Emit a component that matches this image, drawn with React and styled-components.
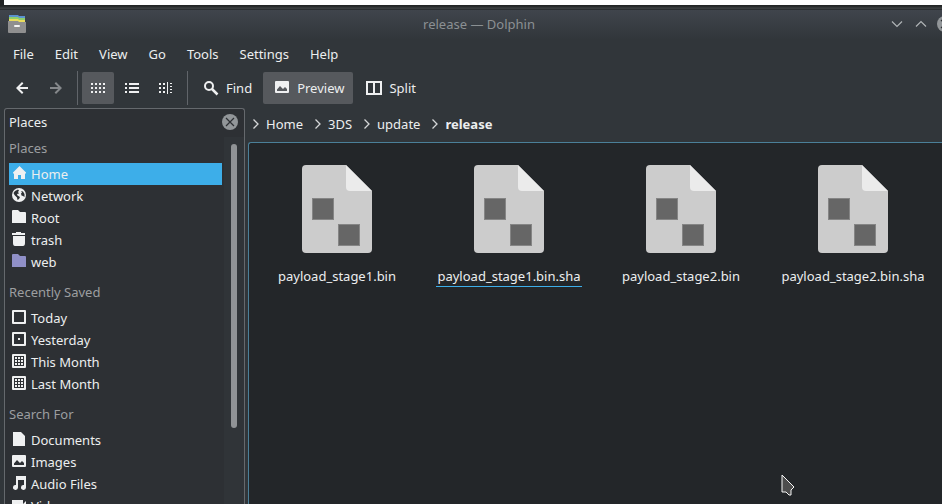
import styled, { createGlobalStyle } from 'styled-components';

const GlobalStyle = createGlobalStyle`
    * {
        box-sizing: border-box;
    }

    body {
        margin: 0;
        overflow: hidden;
        background-color: #31363a;
        color: #eceeef;
        font-family: "Noto Sans", sans-serif;
        font-size: 13px;
        line-height: 20px;
    }

    button {
        font: inherit;
        color: inherit;
        background: none;
        border: none;
        padding: 0;
    }

    a {
        color: inherit;
        text-decoration: none;
    }

    ul, ol {
        list-style: none;
        margin: 0;
        padding: 0;
    }
`

const Desktop = styled.div`
    display: flex;
    flex-direction: column;
    height: 100vh;
    overflow: hidden;
    position: relative;
`

const WindowBehind = styled.div`
    flex: none;
    height: 10px;
    padding-left: 4px;
    background: linear-gradient(#232526 0 6px, #3b3e40 8px, #3b3e40 9px, #2b2e31 9px);
`

const Paper = styled.div`
    height: 5px;
    background-color: white;
`

/* the window runs a little past the right edge of the screen */
const TitleBar = styled.header`
    flex: none;
    display: grid;
    grid-template-columns: 80px 1fr 83px;
    align-items: center;
    width: calc(100% + 14px);
    height: 30px;
    padding: 0 3px 2px 8px;
    background: linear-gradient(#40454c, #31363a);
`

const Title = styled.h1`
    margin: 0;
    font-size: 13px;
    font-weight: 400;
    text-align: center;
    color: #8b9093;
`

const WindowButtons = styled.div`
    display: flex;
    justify-content: flex-end;
    gap: 8px;

    button {
        display: flex;
    }
`

const MenuBar = styled.nav`
    flex: none;
    display: flex;
    gap: 1px;
    height: 28px;
    padding-left: 3px;
`

const MenuButton = styled.button`
    padding: 0 10px;
`

const ToolBar = styled.div`
    flex: none;
    display: flex;
    align-items: center;
    gap: 2px;
    height: 40px;
    padding-left: 6px;
`

const ToolButton = styled.button`
    display: flex;
    align-items: center;
    justify-content: center;
    gap: 7px;
    height: 32px;
    min-width: 32px;
    padding: ${props => props.$labelled ? '0 9px 0 11px' : '0'};
    border-radius: 2px;
    background-color: ${props => props.$active ? '#56595d' : 'transparent'};
`

const Separator = styled.span`
    width: 1px;
    height: 34px;
    margin: 0 2px 0 3px;
    background-color: #61656a;
`

const Body = styled.div`
    flex: 1;
    display: flex;
    gap: 3px;
    min-height: 0;
    padding-left: 4px;
`

const Sidebar = styled.aside`
    flex: none;
    display: flex;
    flex-direction: column;
    width: 241px;
    border: 1px solid #65696d;
    border-bottom: none;
    border-radius: 3px 3px 0 0;
    background-color: #2d3034;
`

const SidebarHeader = styled.div`
    flex: none;
    display: flex;
    align-items: center;
    justify-content: space-between;
    height: 28px;
    padding: 0 6px 2px 4px;

    button {
        display: flex;
    }
`

const SidebarBody = styled.div`
    flex: 1;
    display: flex;
    min-height: 0;
`

const PlaceLists = styled.div`
    flex: 1;
    padding: 0 2px 0 4px;
    overflow: hidden;
`

const Section = styled.section`
    margin-bottom: 8px;
`

const SectionTitle = styled.h2`
    margin: 0 0 4px;
    font-size: 13px;
    font-weight: 400;
    line-height: 22px;
    color: #9c9ea0;
`

const Place = styled.a`
    display: flex;
    align-items: center;
    gap: 4px;
    height: 22px;
    padding-left: 2px;
    background-color: ${props => props.$selected ? '#3daee9' : 'transparent'};
`

const ScrollTrack = styled.div`
    flex: none;
    width: 20px;
    padding: 7px 7px 0;
    background-color: #303438;
`

const ScrollThumb = styled.div`
    width: 6px;
    height: 79%;
    border-radius: 3px;
    background-color: #909396;
`

const Main = styled.main`
    flex: 1;
    display: flex;
    flex-direction: column;
    min-width: 0;
`

const Breadcrumbs = styled.ol`
    flex: none;
    display: flex;
    height: 34px;
    padding: 6px 0 0 5px;
`

const Crumb = styled.li`
    display: flex;
    align-items: center;
    gap: 7px;
    height: 20px;
    margin-right: 12px;
    font-weight: ${props => props.$current ? 700 : 400};
`

const FileView = styled.ul`
    flex: 1;
    display: grid;
    grid-template-columns: repeat(auto-fill, 172px);
    align-content: start;
    padding: 22px 0 0 2px;
    border: solid #4b8099;
    border-width: 1px 0 0 1px;
    border-radius: 3px 0 0 0;
    background-color: #232629;
`

const File = styled.button`
    display: flex;
    flex-direction: column;
    align-items: center;
    gap: 13px;
    width: 100%;
`

const FileName = styled.span`
    padding: 0 1px;
    border-bottom: 1px solid ${props => props.$hovered ? '#3daee9' : 'transparent'};
`

const Cursor = styled.svg`
    position: absolute;
    right: 147px;
    bottom: 8px;
`

const Icon = ({ children, color = '#eff0f1' }) => (
    <svg width="16" height="16" viewBox="0 0 16 16" fill={color} aria-hidden="true">{children}</svg>
)

const Dots = ({ xs, ys = [3, 7, 11], w = 2 }) => (
    xs.map(x => ys.map(y => <rect key={`${x}-${y}`} x={x} y={y} width={w} height="2" />))
)

const Calendar = ({ children }) => (
    <Icon>
        <path fillRule="evenodd" d="M2 0h12a1 1 0 0 1 1 1v12a1 1 0 0 1-1 1H2a1 1 0 0 1-1-1V1a1 1 0 0 1 1-1zM3 2v10h10V2z" />
        {children}
    </Icon>
)

const FolderIcon = ({ color }) => (
    <Icon color={color}><path d="M1 1q0-1 1-1h5l2 2h5q1 0 1 1v10H1z" /></Icon>
)

const PictureIcon = () => (
    <Icon><path fillRule="evenodd" d="M2 1h12q1 0 1 1v10q0 1-1 1H2q-1 0-1-1V2q0-1 1-1zM3 11h10V9l-2-2-2 2-3-3-3 3.500z" /></Icon>
)

const icons = {
    home: <Icon><path d="M8.500 0L15 6.500V7.500h-1V13h-4V9H7v4H3V7.500H2V6.500z" /></Icon>,
    network: (
        <Icon>
            <circle cx="8" cy="7" r="7" />
            <path fill="#2d3034" d="M4 3l3-1.500 1 1L7 4l1 1.500-2 .5.500 1.500L9 9l-1 2-1.500 1L6 9.500 3.500 7 2.500 5zM10 3l2 .5 1.500 2.500v3L12 8l-1.500-.5L10 5.500l1-1z" />
        </Icon>
    ),
    folder: <FolderIcon />,
    trash: <Icon><path d="M5 0h5v1h4v2H1V1h4zM2 4h12v7q0 3-2 3H4q-2 0-2-3z" /></Icon>,
    web: <FolderIcon color="#9090c8" />,
    today: <Calendar />,
    yesterday: <Calendar><rect x="7" y="6" width="2" height="2" /></Calendar>,
    month: <Calendar><Dots xs={[4, 7, 10]} ys={[3, 6, 9]} /></Calendar>,
    document: <Icon><path d="M2 0h8l4 4v10H2z" /></Icon>,
    picture: <PictureIcon />,
    audio: <Icon><path d="M5 0h10v11.500a2.500 2.500 0 1 1-2-2.500V4H7v7.500A2.500 2.500 0 1 1 5 9z" /></Icon>,
    video: <Icon><path d="M1 2h11v10H1zM12 6l3-3v8l-3-3z" /></Icon>,
}

const SECTIONS = [
    {
        title: 'Places',
        items: [
            ['Home', 'home'],
            ['Network', 'network'],
            ['Root', 'folder'],
            ['trash', 'trash'],
            ['web', 'web'],
        ],
    },
    {
        title: 'Recently Saved',
        items: [
            ['Today', 'today'],
            ['Yesterday', 'yesterday'],
            ['This Month', 'month'],
            ['Last Month', 'month'],
        ],
    },
    {
        title: 'Search For',
        items: [
            ['Documents', 'document'],
            ['Images', 'picture'],
            ['Audio Files', 'audio'],
            ['Videos', 'video'],
        ],
    },
];

const MENUS = ['File', 'Edit', 'View', 'Go', 'Tools', 'Settings', 'Help'];
const CRUMBS = ['Home', '3DS', 'update', 'release'];
const FILES = ['payload_stage1.bin', 'payload_stage1.bin.sha', 'payload_stage2.bin', 'payload_stage2.bin.sha'];
const HOVERED = 'payload_stage1.bin.sha';

const AppIcon = () => (
    <svg width="18" height="20" viewBox="0 0 18 20" aria-hidden="true">
        <path d="M1 1h9l1 1h6v5H1z" fill="#5b93cf" />
        <path d="M1 3h9l1 1h6v4H1z" fill="#8fce6b" />
        <path d="M1 5h9l1 1h6v3H1z" fill="#e9dc5d" />
        <path d="M0 7h10l1 1h7v10q0 1-1 1H1q-1 0-1-1z" fill="#8f8f8f" />
        <rect x="6" y="11" width="6" height="2" rx="1" fill="#f4f4f4" />
    </svg>
)

const CloseIcon = () => (
    <svg width="16" height="16" viewBox="0 0 16 16" aria-hidden="true">
        <circle cx="8" cy="8" r="8" fill="#929699" />
        <path d="M4 4l8 8M12 4l-8 8" stroke="#2d3034" strokeWidth="1.200" />
    </svg>
)

const Chevron = ({ d }) => (
    <svg width="16" height="16" viewBox="0 0 16 16" fill="none" stroke="#b0b4b6" strokeWidth="1.200" aria-hidden="true">
        <path d={d} />
    </svg>
)

const CrumbArrow = () => (
    <svg width="6" height="10" viewBox="0 0 6 10" fill="none" stroke="#d5d7d8" strokeWidth="1.300" aria-hidden="true">
        <path d="M.5.5L5 5 .5 9.500" />
    </svg>
)

const FileIcon = () => (
    <svg width="70" height="88" viewBox="0 0 70 88" aria-hidden="true">
        <path d="M4 0h40l26 26v58q0 4-4 4H4q-4 0-4-4V4q0-4 4-4z" fill="#cccccc" />
        <path d="M44 0l26 26H48q-4 0-4-4z" fill="#ebebeb" />
        <g fill="#666666" stroke="#858585">
            <rect x="10.500" y="33.500" width="21" height="21" />
            <rect x="36.500" y="59.500" width="21" height="21" />
        </g>
    </svg>
)

const App = () => {
    return (
        <Desktop>
            <GlobalStyle />
            <WindowBehind><Paper /></WindowBehind>
            <TitleBar>
                <AppIcon />
                <Title>release — Dolphin</Title>
                <WindowButtons>
                    <button aria-label="Minimize"><Chevron d="M3 5.500l5 5 5-5" /></button>
                    <button aria-label="Maximize"><Chevron d="M3 10.500l5-5 5 5" /></button>
                    <button aria-label="Close"><CloseIcon /></button>
                </WindowButtons>
            </TitleBar>
            <MenuBar>
                {MENUS.map(menu => <MenuButton key={menu}>{menu}</MenuButton>)}
            </MenuBar>
            <ToolBar>
                <ToolButton aria-label="Back">
                    <Icon><path d="M8 2L2 8l6 6 1.400-1.400L5.800 9H14V7H5.800l3.600-3.600z" /></Icon>
                </ToolButton>
                <ToolButton aria-label="Forward">
                    <Icon color="#85888b"><path d="M8 2l6 6-6 6-1.400-1.400L10.200 9H2V7h8.200L6.600 3.400z" /></Icon>
                </ToolButton>
                <Separator />
                <ToolButton $active aria-label="Icons">
                    <Icon><Dots xs={[1, 5, 9, 13]} /></Icon>
                </ToolButton>
                <ToolButton aria-label="Compact">
                    <Icon><Dots xs={[1]} /><Dots xs={[5]} w={10} /></Icon>
                </ToolButton>
                <ToolButton aria-label="Details">
                    <Icon>
                        <Dots xs={[1, 5]} />
                        <rect x="9" y="2" width="1" height="12" />
                        <path d="M12 3h2v1h-2zM12 6h2v1h-2zM12 9h2v1h-2zM12 12h2v1h-2z" />
                    </Icon>
                </ToolButton>
                <Separator />
                <ToolButton $labelled>
                    <Icon color="none">
                        <circle cx="6" cy="6" r="4" stroke="#eff0f1" strokeWidth="2" />
                        <path d="M9 9l5.500 5.500" stroke="#eff0f1" strokeWidth="2.500" />
                    </Icon>
                    Find
                </ToolButton>
                <ToolButton $labelled $active>
                    <PictureIcon />
                    Preview
                </ToolButton>
                <ToolButton $labelled>
                    <Icon><path fillRule="evenodd" d="M0 1h16v14H0zM2 3v10h5V3zM9 3v10h5V3z" /></Icon>
                    Split
                </ToolButton>
            </ToolBar>
            <Body>
                <Sidebar>
                    <SidebarHeader>
                        Places
                        <button aria-label="Close panel"><CloseIcon /></button>
                    </SidebarHeader>
                    <SidebarBody>
                        <PlaceLists>
                            {SECTIONS.map(section => (
                                <Section key={section.title}>
                                    <SectionTitle>{section.title}</SectionTitle>
                                    {section.items.map(([label, icon]) => (
                                        <Place key={label} href="#" $selected={label === 'Home'}>
                                            {icons[icon]}
                                            {label}
                                        </Place>
                                    ))}
                                </Section>
                            ))}
                        </PlaceLists>
                        <ScrollTrack><ScrollThumb /></ScrollTrack>
                    </SidebarBody>
                </Sidebar>
                <Main>
                    <Breadcrumbs>
                        {CRUMBS.map(crumb => (
                            <Crumb key={crumb} $current={crumb === 'release'}>
                                <CrumbArrow />
                                <a href="#">{crumb}</a>
                            </Crumb>
                        ))}
                    </Breadcrumbs>
                    <FileView>
                        {FILES.map(file => (
                            <li key={file}>
                                <File>
                                    <FileIcon />
                                    <FileName $hovered={file === HOVERED}>{file}</FileName>
                                </File>
                            </li>
                        ))}
                    </FileView>
                </Main>
            </Body>
            <Cursor width="14" height="22" viewBox="0 0 14 22" aria-hidden="true">
                <path d="M1 1v17h4l3 3h2v-5l3-3z" fill="#4d4d4d" stroke="#f5f5f5" />
            </Cursor>
        </Desktop>
    );
}

export default App;
